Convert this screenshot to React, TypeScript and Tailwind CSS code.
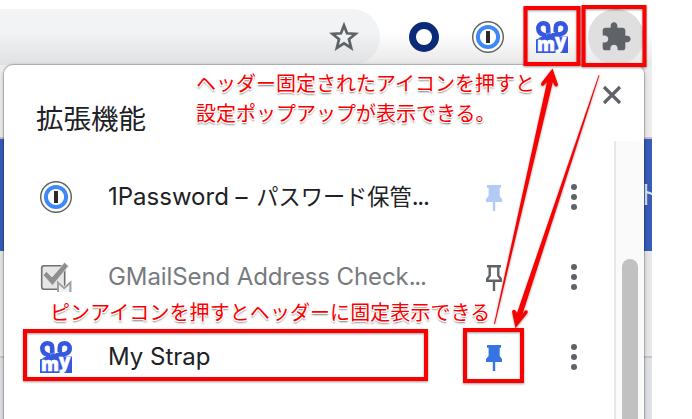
import React from "react";

const FONT = "font-[Inter,'Noto_Sans_CJK_JP',sans-serif]";

function OnePasswordIcon() {
  return (
    <svg width="32" height="32" viewBox="0 0 32 32" className="shrink-0">
      <circle cx="16" cy="16" r="15.3" fill="#fff" stroke="#666" strokeWidth="1.5" />
      <circle cx="16" cy="16" r="10.1" fill="#fff" stroke="#3d8af7" strokeWidth="4" />
      <rect x="14" y="10" width="4" height="12" fill="#2b2b2b" />
    </svg>
  );
}

function StrapIcon() {
  return (
    <svg width="32" height="32" viewBox="0 0 32 32" className="shrink-0 overflow-visible">
      <g fill="none" stroke="#3558e0" strokeWidth="4.6">
        <path d="M19.8 11V7C19.8 3.8 21.8 2.3 24.7 2.3C27.8 2.3 29.7 4.6 29.7 7.6C29.7 14.5 21 13 4 19" />
        <path d="M12.2 12V7C12.2 3.8 10.2 2.3 7.3 2.3C4.2 2.3 2.3 4.6 2.3 7.6C2.3 11.5 5 14 11 14.8" />
      </g>
      <path d="M10 12.8L14.5 10.5V14L10 15.8Z" fill="#5b79ea" />
      <path d="M0 18.6L10 14.5L21 10.5L26 13L24 15.5H32V32H0Z" fill="#3558e0" />
      <text y="30" fill="#fff" stroke="#fff" strokeWidth=".6" fontSize="18.5" fontWeight="800" className="font-['Open_Sans',sans-serif]">
        <tspan x="1" textLength="18" lengthAdjust="spacingAndGlyphs">m</tspan>
        <tspan x="19" dy="-2.8">y</tspan>
      </text>
    </svg>
  );
}

function MailCheckIcon() {
  return (
    <svg width="32" height="32" viewBox="0 0 32 32" className="shrink-0">
      <rect x="1.7" y="4.7" width="23" height="23.5" rx="2.5" fill="#e6e6e6" stroke="#707070" strokeWidth="1.6" />
      <path d="M3 14L6.5 10.5L12 16L24.5 1.5L28.5 5L12.5 24.5Z" fill="#8f8f8f" stroke="#e6e6e6" strokeWidth=".8" />
      <path d="M17 31V20.5H19.5L24.2 25L29 20.5H31.5V31Z" fill="#f2f2f2" />
      <path d="M18 31V21.5L24.2 27.2L30.4 21.5V31" fill="none" stroke="#a0a0a0" strokeWidth="2" />
    </svg>
  );
}

function PinIcon({ color, outline = false }: { color: string; outline?: boolean }) {
  return (
    <svg width="16" height="27" viewBox="0 0 16 27" className="shrink-0">
      {outline ? (
        <>
          <path d="M1 1.2H15M3.7 1V10.7L1.2 14V15.8H14.8V14L12.3 10.7V1" fill="none" stroke={color} strokeWidth="2.4" />
          <path d="M6.8 16H9.2V26H6.8Z" fill={color} />
        </>
      ) : (
        <path d="M1 0H15V2.7H13.7V11L16 14V17H9.2V26H6.8V17H0V14L2.6 11V2.7H1Z" fill={color} />
      )}
    </svg>
  );
}

function MoreButton() {
  return (
    <button aria-label="その他" className="flex w-6 flex-col items-center gap-1">
      <span className="size-1.5 rounded-full bg-[#5f6368]" />
      <span className="size-1.5 rounded-full bg-[#5f6368]" />
      <span className="size-1.5 rounded-full bg-[#5f6368]" />
    </button>
  );
}

type RowProps = { icon: React.ReactNode; label: React.ReactNode; pin: React.ReactNode; muted?: boolean };

function ExtensionRow({ icon, label, pin, muted }: RowProps) {
  return (
    <div className="flex h-20 items-center pl-9">
      {icon}
      <div className={`ml-9 w-[378px] whitespace-nowrap text-[24px] leading-8 ${muted ? "text-[#777b80]" : "text-[#202124]"}`}>{label}</div>
      <div className="flex w-4 pt-0.5">{pin}</div>
      <div className="ml-15"><MoreButton /></div>
    </div>
  );
}

function Toolbar() {
  return (
    <div className="flex h-[65px] bg-linear-to-b from-white from-50% to-[#e8e8e9]">
      <div className="mt-[9px] flex h-14 w-[380px] justify-end rounded-r-full bg-linear-to-b from-[#f1f3f4] from-40% to-[#dfe1e3] pr-[21px]">
        <svg width="30" height="30" viewBox="0 0 30 30" className="mt-[13px]">
          <path d="M15 3.4L18 11.3L26.7 11.8L20 17.3L22.2 26L15 21.3L7.8 26L10 17.3L3.3 11.8L12 11.3Z" fill="none" stroke="#5f6368" strokeWidth="2.7" />
        </svg>
      </div>
      <div className="mt-[22px] ml-[29px] size-[30px] rounded-full border-[7.5px] border-[#0b2b78] bg-white" />
      <div className="mt-[21px] ml-[33px]"><OnePasswordIcon /></div>
      <div className="mt-[21px] ml-8"><StrapIcon /></div>
      <div className="mt-[9px] ml-5 flex size-14 items-center justify-center rounded-full bg-[#dfdfdf]">
        <svg width="32" height="32" viewBox="0 0 24 24" fill="#5f6368">
          <path d="M20.5 11H19V7c0-1.1-.9-2-2-2h-4V3.5C13 2.12 11.88 1 10.5 1S8 2.12 8 3.5V5H4c-1.1 0-1.99.9-1.99 2v3.8H3.5c1.49 0 2.7 1.21 2.7 2.7s-1.21 2.7-2.7 2.7H2V20c0 1.1.9 2 2 2h3.8v-1.5c0-1.49 1.21-2.7 2.7-2.7 1.49 0 2.7 1.21 2.7 2.7V22H17c1.1 0 2-.9 2-2v-4h1.5c1.38 0 2.5-1.12 2.5-2.5S21.88 11 20.5 11z" />
        </svg>
      </div>
    </div>
  );
}

function Popup() {
  return (
    <section className="absolute top-[65px] left-1 flex h-[370px] w-[640px] flex-col overflow-hidden rounded-t-[9px] bg-white shadow-[0_0_1px_1px_rgba(0,0,0,.22),0_2px_6px_rgba(0,0,0,.2)]">
      <header className="flex h-[76px] shrink-0 justify-between pr-[22px] pl-8">
        <h1 className="pt-[34px] text-[27.5px] leading-10 text-[#202124]">拡張機能</h1>
        <svg width="20" height="20" viewBox="0 0 20 20" className="mt-5">
          <path d="M2 2L18 18M18 2L2 18" stroke="#5f6368" strokeWidth="3.2" />
        </svg>
      </header>
      <div className="flex flex-1">
        <div className="w-[610px] pt-4">
          <ExtensionRow
            icon={<OnePasswordIcon />}
            label={<>1Password – <span className="ml-0.5 text-[22.2px]">パスワード保管</span><span className="tracking-[-1.3px]">...</span></>}
            pin={<PinIcon color="#b3caf4" />}
          />
          <ExtensionRow
            muted
            icon={<MailCheckIcon />}
            label={<><span className="tracking-[-0.1px]">GMailSend Address Check</span><span className="tracking-[-1.3px]">...</span></>}
            pin={<PinIcon color="#5f6368" outline />}
          />
          <ExtensionRow icon={<StrapIcon />} label="My Strap" pin={<PinIcon color="#3574e2" />} />
        </div>
        <div className="w-[30px] rounded-tr-lg border-l-2 border-[#e8e8e8] bg-[#fafafa] pt-[118px] pl-1.5">
          <div className="h-[200px] w-4 rounded-full bg-[#c1c1c1]" />
        </div>
      </div>
    </section>
  );
}

const NOTE =
  "absolute whitespace-nowrap text-[20px] leading-[30px] text-[#fa0000] font-normal [text-shadow:1px_0_#fff,-1px_0_#fff,0_1px_#fff,0_-1px_#fff,1px_1px_#fff,-1px_1px_#fff,0_2px_2px_rgba(0,0,0,.6)]";

function Annotations() {
  return (
    <>
      <p className={`${NOTE} top-[69px] left-[196px]`}>ヘッダー固定されたアイコンを押すと<br />設定ポップアップが表示できる。</p>
      <p className={`${NOTE} top-[298px] left-[50px] tracking-[0.08px]`}>ピンアイコンを押すとヘッダーに固定表示できる</p>
      <svg width="692" height="419" className="absolute inset-0 drop-shadow-[0_1px_1px_rgba(0,0,0,.4)]">
        <g fill="none" stroke="#fa0000" strokeWidth="4">
          <rect x="525.5" y="8" width="53" height="56" />
          <rect x="583.5" y="7" width="61" height="58" />
          <rect x="465" y="330" width="57" height="51" />
          <rect x="25" y="331" width="401" height="48" />
        </g>
        <g fill="#fa0000">
          <path d="M494 324L547 82L543.5 85.5Q540.5 86.5 541.2 83L552.5 68.5L558 84.5Q557.5 88 554.5 85.5L552.8 82L495 324Z" />
          <path d="M598.7 75L599.5 75.3L522.5 314L525 310.5Q528.5 309.5 527.5 313L515.5 328L512 311.5Q513 308.5 516 311L517 313Z" />
        </g>
      </svg>
    </>
  );
}

export default function App() {
  return (
    <main className={`relative h-[419px] w-[692px] overflow-hidden bg-white ${FONT}`}>
      <div className="w-[652px]">
        <Toolbar />
        <div className="h-[74px] border-b-2 border-[#c4c4c4] bg-[#ededed]" />
        <div className="flex h-28 items-center overflow-hidden bg-[#385cba] pl-[636px]">
          <span className="text-[26px] leading-8 whitespace-nowrap text-[#dfe5f4]">ト</span>
        </div>
        <div className="h-[107px] border-b-2 border-[#c8c8c8] bg-[#e8e8e8]" />
        <div className="h-[61px] bg-[#e0e2e5]" />
      </div>
      <Popup />
      <Annotations />
    </main>
  );
}
